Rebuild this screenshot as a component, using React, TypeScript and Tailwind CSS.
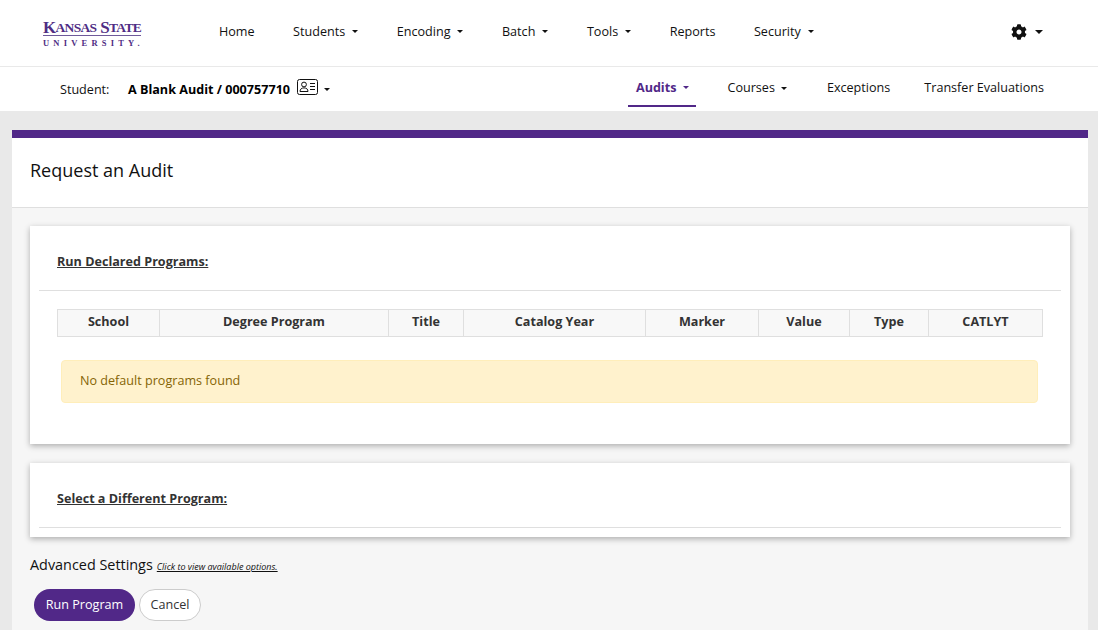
import { FaCog } from 'react-icons/fa';

const mainNav = [
  { label: 'Home', caret: false },
  { label: 'Students', caret: true },
  { label: 'Encoding', caret: true },
  { label: 'Batch', caret: true },
  { label: 'Tools', caret: true },
  { label: 'Reports', caret: false },
  { label: 'Security', caret: true },
];

const columns = [
  { label: 'School', width: 'w-[102px]' },
  { label: 'Degree Program', width: 'w-[229px]' },
  { label: 'Title', width: 'w-[75px]' },
  { label: 'Catalog Year', width: 'w-[182px]' },
  { label: 'Marker', width: 'w-[113px]' },
  { label: 'Value', width: 'w-[91px]' },
  { label: 'Type', width: 'w-[79px]' },
  { label: 'CATLYT', width: 'w-[114px]' },
];

const Caret = ({ className = '' }: { className?: string }) => (
  <span className={`inline-block w-0 h-0 border-x-[3.5px] border-x-transparent border-t-[3.5px] border-t-current ${className}`} />
);

const Logo = () => (
  <div className="w-[98px] text-[#4f2d84] font-['Liberation_Serif',serif] leading-none">
    <div className="font-bold text-[17px] tracking-[-0.7px] border-b border-[#6f5a9a] h-[15px] flex items-end whitespace-nowrap">
      <span className="leading-[15px]">K</span><span className="text-[13.5px] leading-[15px]">ANSAS</span>
      <span className="ml-[4px] leading-[15px]">S</span><span className="text-[13.5px] leading-[15px]">TATE</span>
    </div>
    <div className="font-bold text-[8.5px] tracking-[4.2px] mt-[3px] whitespace-nowrap">UNIVERSITY.</div>
  </div>
);

const IdCard = () => (
  <svg width="21" height="16" viewBox="0 0 21 16" fill="none" stroke="#111" strokeWidth="1">
    <rect x="0.5" y="0.5" width="20" height="15" rx="2" />
    <circle cx="7" cy="5.5" r="2.4" />
    <path d="M3 12.5c0-2.4 1.6-3.6 4-3.6s4 1.2 4 3.6z" />
    <path d="M13 4.5h5M13 7.5h5M13 10.5h5" />
  </svg>
);

export default function App() {
  return (
    <div className="h-[630px] overflow-hidden bg-[#e9e9e9] font-['Open_Sans',sans-serif] text-[12.6px] text-[#212529]">
      <header className="h-[67px] bg-white border-b border-[#e9e9e9] flex items-center">
        <div className="ml-[43px] w-[176px] shrink-0 pt-[2px]"><Logo /></div>
        <nav className="flex items-center gap-[38.5px] pb-[2px]">
          {mainNav.map((item) => (
            <a key={item.label} className="flex items-center gap-[7px] text-[#111]">
              {item.label}
              {item.caret && <Caret />}
            </a>
          ))}
        </nav>
        <div className="ml-auto mr-[55px] flex items-center gap-[8px] text-[#111] pb-[2px]">
          <FaCog size={16} />
          <Caret className="border-x-[4px] border-t-[4px]" />
        </div>
      </header>

      <div className="h-[44px] bg-white flex items-start pl-[60px] pr-[54px]">
        <span className="text-[#111] w-[68px] mt-[14px]">Student:</span>
        <span className="font-bold text-black mt-[14px]">A Blank Audit / 000757710</span>
        <span className="ml-[7px] mt-[12px]"><IdCard /></span>
        <Caret className="ml-[6px] mt-[21px] text-[#111]" />
        <nav className="ml-auto flex items-start">
          <a className="h-[40px] pl-[8px] pr-[7px] pt-[12px] flex items-start gap-[7px] font-bold text-[#512888] border-b-2 border-[#512888] mr-[31px]">
            Audits <Caret className="mt-[7px]" />
          </a>
          <a className="flex items-center gap-[6px] mr-[40px] mt-[12px] text-[#111]">Courses <Caret /></a>
          <a className="mr-[34px] mt-[12px] text-[#111]">Exceptions</a>
          <a className="mt-[12px] text-[#111]">Transfer Evaluations</a>
        </nav>
      </div>

      <main className="ml-[12px] mr-[10px] mt-[19px] border-t-8 border-[#512888] bg-[#f6f6f6] h-[500px]">
        <div className="h-[70px] bg-white border-b border-[#dfdfdf] flex items-center pl-[18px] pb-[5px]">
          <h1 className="text-[18px] text-[#111]">Request an Audit</h1>
        </div>

        <div className="px-[18px] pt-[18px]">
          <section className="h-[218px] bg-white shadow-[0_2px_6px_rgba(0,0,0,0.3)] px-[9px]">
            <div className="h-[65px] border-b border-[#dfdfdf] flex items-center pl-[18px] pt-[9px]">
              <h2 className="font-bold underline text-[#333]">Run Declared Programs:</h2>
            </div>
            <table className="mt-[18px] ml-[18px] w-[985px] table-fixed border-collapse">
              <thead>
                <tr>
                  {columns.map((col) => (
                    <th key={col.label} className={`${col.width} h-[27px] p-0 pb-[1px] border border-[#dfdfdf] bg-[#f8f8f8] font-bold text-center text-[#333]`}>
                      {col.label}
                    </th>
                  ))}
                </tr>
              </thead>
            </table>
            <div className="mt-[23px] ml-[22px] w-[977px] h-[43px] bg-[#fff2cd] border border-[#ffeeba] rounded-[4px] flex items-center pl-[18px] pb-[1px] text-[#856404]">
              No default programs found
            </div>
          </section>

          <section className="mt-[19px] h-[74px] bg-white shadow-[0_2px_6px_rgba(0,0,0,0.3)] px-[9px]">
            <div className="h-[65px] border-b border-[#dfdfdf] flex items-center pl-[18px] pt-[9px]">
              <h2 className="font-bold underline text-[#333]">Select a Different Program:</h2>
            </div>
          </section>

          <div className="mt-[17px] flex items-baseline gap-[4px]">
            <span className="text-[14.4px] text-[#111]">Advanced Settings</span>
            <a className="text-[9px] italic underline text-[#111]">Click to view available options.</a>
          </div>

          <div className="mt-[13px] ml-[4px] flex items-center gap-[4px]">
            <button className="h-[32px] w-[101px] rounded-full bg-[#512888] text-white pt-[1px]">Run Program</button>
            <button className="h-[32px] w-[62px] rounded-full bg-white border border-[#cccccc] text-[#333] pt-[1px]">Cancel</button>
          </div>
        </div>
      </main>
    </div>
  );
}
